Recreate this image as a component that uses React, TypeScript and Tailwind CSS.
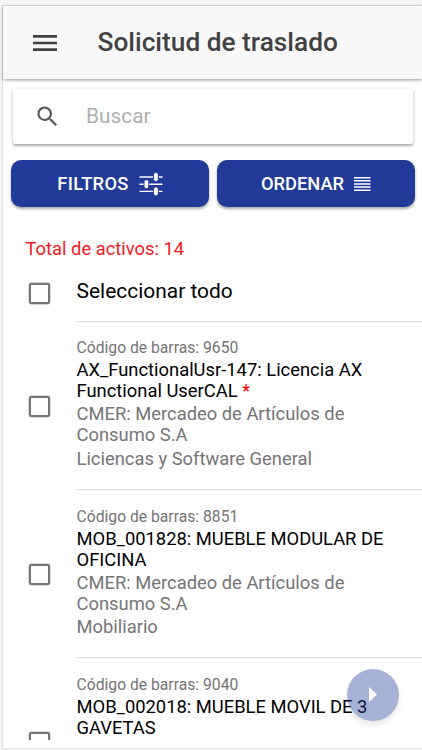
import { MdMenu, MdSearch } from "react-icons/md";

type Asset = {
  barcode: string;
  name: string;
  company?: string;
  category?: string;
  required?: boolean;
};

const assets: Asset[] = [
  {
    barcode: "9650",
    name: "AX_FunctionalUsr-147: Licencia AX Functional UserCAL",
    company: "CMER: Mercadeo de Artículos de Consumo S.A",
    category: "Liciencas y Software General",
    required: true,
  },
  {
    barcode: "8851",
    name: "MOB_001828: MUEBLE MODULAR DE OFICINA",
    company: "CMER: Mercadeo de Artículos de Consumo S.A",
    category: "Mobiliario",
  },
  {
    barcode: "9040",
    name: "MOB_002018: MUEBLE MOVIL DE 3 GAVETAS",
  },
];

function Checkbox() {
  return (
    <span
      role="checkbox"
      aria-checked="false"
      className="block size-[21px] rounded-[2px] border-2 border-[#757575] ring-[0.4px] ring-[#757575]/60"
    />
  );
}

function OptionsIcon() {
  return (
    <svg width="24" height="24" viewBox="0 0 24 24" fill="white">
      <path d="M0.5 4.3h23v1.4h-23zM0.5 11.5h23v1.4h-23zM0.5 18.7h23v1.4h-23z" />
      <g stroke="#223b99" strokeWidth="1">
        <rect x="14.5" y="0.6" width="4.8" height="8.8" rx="2" />
        <rect x="5" y="7.8" width="4.8" height="8.8" rx="2" />
        <rect x="14.5" y="15" width="4.8" height="8.8" rx="2" />
      </g>
    </svg>
  );
}

function ReorderIcon() {
  return (
    <svg width="17" height="14" viewBox="0 0 17 14" fill="white">
      <path d="M0 0h16.5v1.5H0zM0 3.1h16.5v1.5H0zM0 6.2h16.5v1.5H0zM0 9.3h16.5v1.5H0zM0 12.4h16.5v1.5H0z" />
    </svg>
  );
}

function AssetRow({ asset }: { asset: Asset }) {
  return (
    <li className="flex h-[168.2px] shrink-0">
      <div className="flex w-[73.5px] items-center pl-[26px]">
        <Checkbox />
      </div>
      <div className="flex-1 border-b border-[#dedede] pt-[16.4px] pr-3 text-[18.36px] leading-[21px] text-[#757575]">
        <p className="text-[15.7px] leading-[19px]">Código de barras: {asset.barcode}</p>
        <h3 className="mt-[2px] text-black">
          {asset.name} {asset.required && <span className="text-[#ff0000]">*</span>}
        </h3>
        {asset.company && <p className="mt-[2px]">{asset.company}</p>}
        {asset.category && <p className="mt-[2.6px]">{asset.category}</p>}
      </div>
    </li>
  );
}

export default function App() {
  return (
    <div className="h-[750px] w-[422px] overflow-hidden bg-[#f5f5f5] pt-[5px] pl-[2px] font-['Roboto',sans-serif]">
      <div className="relative flex h-[744px] flex-col border-y border-l border-[#dfdfe1] border-b-[#e4e4e4] bg-white">
        <header className="flex h-[73px] shrink-0 items-center bg-[#f8f8f8] pl-[26px] text-[#424242] shadow-[0_1px_3px_rgba(0,0,0,0.4)]">
          <MdMenu size={32} />
          <h1 className="ml-[36.5px] text-[26.25px] font-medium">Solicitud de traslado</h1>
        </header>

        <div className="mt-[10px] mr-[9px] ml-[10px] flex h-[55px] shrink-0 items-center rounded-[2px] bg-white pl-[21px] shadow-[0_2px_2px_rgba(0,0,0,0.22),0_1px_4px_rgba(0,0,0,0.18)]">
          <MdSearch size={27} className="text-[#5b5b5b]" />
          <span className="ml-[25px] text-[20.9px] text-[#aeaeae]">Buscar</span>
        </div>

        <div className="mt-4 mr-[7px] ml-2 flex h-[47px] shrink-0 gap-2 text-[18.3px] font-medium text-white">
          <button className="flex flex-1 items-center justify-center gap-[10px] rounded-[10px] bg-[#223b99] shadow-[0_2px_3px_rgba(0,0,0,0.35)]">
            <span className="tracking-[0.3px]">FILTROS</span>
            <OptionsIcon />
          </button>
          <button className="flex flex-1 items-center justify-center gap-[10px] rounded-[10px] bg-[#223b99] shadow-[0_2px_3px_rgba(0,0,0,0.35)]">
            ORDENAR
            <ReorderIcon />
          </button>
        </div>

        <p className="mt-[31px] ml-[22.5px] shrink-0 text-[18.36px] leading-[22px] text-[#f5191c]">
          Total de activos: 14
        </p>

        <ul className="flex h-[480px] shrink-0 flex-col overflow-hidden">
          <li className="flex h-[62px] shrink-0">
            <div className="flex w-[73.5px] items-center pt-1 pl-[26px]">
              <Checkbox />
            </div>
            <div className="flex flex-1 items-center border-b border-[#dedede] pt-[2px] text-[20.95px] text-black">
              Seleccionar todo
            </div>
          </li>
          {assets.map((asset) => (
            <AssetRow key={asset.barcode} asset={asset} />
          ))}
        </ul>

        <button
          aria-label="Continuar"
          className="absolute right-[23px] bottom-[27px] flex size-[52.5px] items-center justify-center rounded-full bg-[#223b99]/40 shadow-[0_4px_6px_rgba(0,0,0,0.1)]"
        >
          <svg width="8" height="15" viewBox="0 0 8 15" fill="white">
            <path d="M0 0l8 7.5L0 15z" />
          </svg>
        </button>
      </div>
    </div>
  );
}
